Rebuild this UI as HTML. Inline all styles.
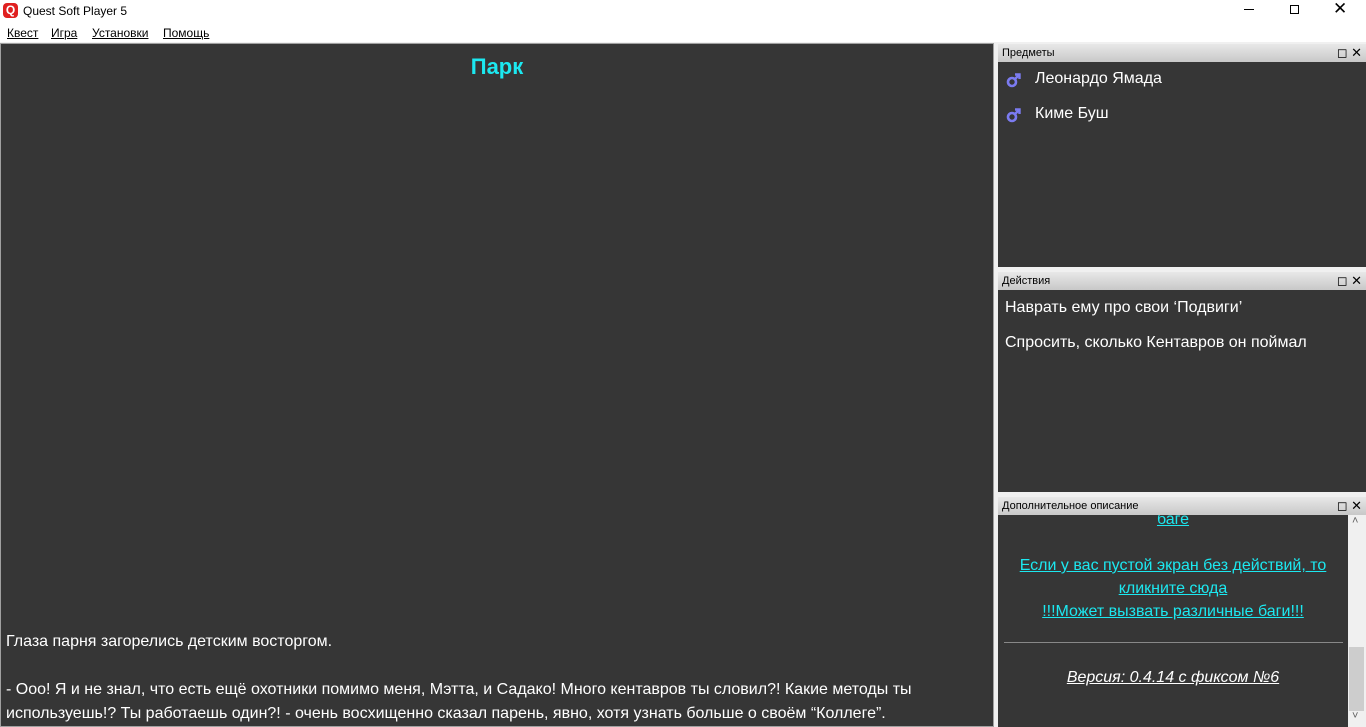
<!DOCTYPE html>
<html><head><meta charset="utf-8"><style>
*{margin:0;padding:0;box-sizing:border-box}
body{width:1366px;height:727px;overflow:hidden;background:#f0f0f0;font-family:"Liberation Sans","DejaVu Sans",sans-serif;position:relative}
.t{position:absolute;left:0;top:0;width:1366px;height:22px;background:#fff;font-size:12px}
.menu{position:absolute;top:22px;left:0;width:1366px;height:20px;background:#fff;font-size:12px}
.menu span{position:absolute;top:4px;text-decoration:underline;text-decoration-thickness:1px}
.main{position:absolute;left:0;top:43px;width:994px;height:684px;background:#363636;border:1px solid #a0a0a0;color:#fff;font-size:16px}
.ph{position:absolute;left:998px;width:368px;height:18px;background:linear-gradient(#e8e8e8,#c8c8c8);font-size:11px;padding:3px 4px;color:#000}
.ph b{position:absolute;right:4px;top:1px;font-weight:normal;font-size:13px}
.pc{position:absolute;left:998px;width:368px;background:#363636;color:#fff;font-size:16px}
.cy{color:#1ce8f0;text-decoration:underline}
</style></head><body>
<div class="t">
<div style="position:absolute;left:3px;top:3px;width:15px;height:15px;background:#e02020;border-radius:4px;color:#fff;font-weight:bold;font-size:12px;text-align:center;line-height:15px">Q</div>
<div style="position:absolute;left:23px;top:4px">Quest Soft Player 5</div>
<div style="position:absolute;left:1244px;top:9px;width:10px;height:1px;background:#000"></div>
<div style="position:absolute;left:1290px;top:5px;width:9px;height:9px;border:1px solid #000"></div>
<div style="position:absolute;left:1333px;top:-1px;font-size:17px">✕</div>
</div>
<div class="menu"><span style="left:7px">Квест</span><span style="left:51px">Игра</span><span style="left:92px">Установки</span><span style="left:163px">Помощь</span></div>
<div class="main">
<div style="position:absolute;left:0;width:992px;top:10px;text-align:center;color:#1ce8f0;font-weight:bold;font-size:22px">Парк</div>
<div style="position:absolute;left:5px;top:586px;line-height:24px;width:985px">Глаза парня загорелись детским восторгом.<br><br>- Ооо! Я и не знал, что есть ещё охотники помимо меня, Мэтта, и Садако! Много кентавров ты словил?! Какие методы ты используешь!? Ты работаешь один?! - очень восхищенно сказал парень, явно, хотя узнать больше о своём “Коллеге”.</div>
</div>
<div class="ph" style="top:44px">Предметы<b>◻ ✕</b></div>
<div class="pc" style="top:62px;height:205px">
<svg style="position:absolute;left:8px;top:10px" width="16" height="16" viewBox="0 0 16 16"><circle cx="6" cy="10" r="4" fill="none" stroke="#7b7bf0" stroke-width="2.6"/><path d="M8.5 7.5L13 3M9 2.5h4.5v4.5" fill="none" stroke="#7b7bf0" stroke-width="2.4"/></svg><div style="position:absolute;left:37px;top:8px">Леонардо Ямада</div>
<svg style="position:absolute;left:8px;top:45px" width="16" height="16" viewBox="0 0 16 16"><circle cx="6" cy="10" r="4" fill="none" stroke="#7b7bf0" stroke-width="2.6"/><path d="M8.5 7.5L13 3M9 2.5h4.5v4.5" fill="none" stroke="#7b7bf0" stroke-width="2.4"/></svg><div style="position:absolute;left:37px;top:43px">Киме Буш</div>
</div>
<div class="ph" style="top:272px">Действия<b>◻ ✕</b></div>
<div class="pc" style="top:290px;height:202px">
<div style="position:absolute;left:7px;top:9px">Наврать ему про свои ‘Подвиги’</div>
<div style="position:absolute;left:7px;top:44px">Спросить, сколько Кентавров он поймал</div>
</div>
<div class="ph" style="top:497px">Дополнительное описание<b>◻ ✕</b></div>
<div class="pc" style="top:515px;height:212px;overflow:hidden">
<div style="position:absolute;left:0;width:350px;text-align:center;top:-7px;line-height:23px">
<span class="cy">баге</span><br><br><span class="cy">Если у вас пустой экран без действий, то </span><br><span class="cy">кликните сюда</span><br><span class="cy">!!!Может вызвать различные баги!!!</span></div>
<div style="position:absolute;left:6px;top:127px;width:339px;height:1px;background:#888"></div>
<div style="position:absolute;left:0;width:350px;text-align:center;top:154px;font-style:italic;text-decoration:underline">Версия: 0.4.14 с фиксом №6</div>
<div style="position:absolute;left:350px;top:0;width:18px;height:212px;background:#f0f0f0"><div style="position:absolute;left:1px;top:132px;width:15px;height:64px;background:#cdcdcd"></div><div style="position:absolute;left:4px;top:0;font-size:11px;color:#606060">˄</div><div style="position:absolute;left:4px;top:195px;font-size:11px;color:#606060">˅</div></div>
</div>
</body></html>
